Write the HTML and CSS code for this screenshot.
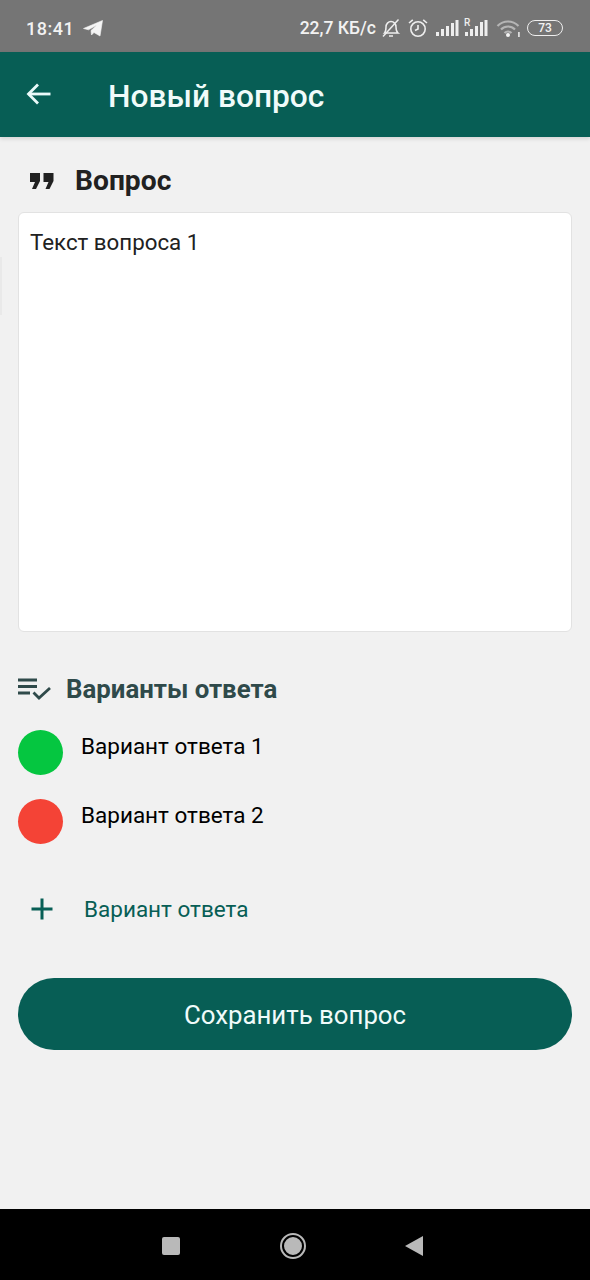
FILE: index.html
```html
<!DOCTYPE html>
<html>
<head>
    <meta charset="UTF-8">
    <title>Новый вопрос</title>
    <link rel="stylesheet" href="styles.css">
</head>
<body>

    <div class="status-bar">
        <div class="status-left">
            <span class="clock">18:41</span>
            <svg class="ic-telegram" width="20" height="18" viewBox="0 0 20 18"><path d="M0.500 9.500 19.500 1.500 17 17 11 13.500 8.500 16 8 11.500 14 6 5.500 10.800 Z" fill="#f5f5f5" stroke="#f5f5f5" stroke-width="0.6" stroke-linejoin="round"/></svg>
        </div>
        <div class="status-right">
            <span class="speed">22,7 КБ/с</span>
            <svg width="20" height="20" viewBox="0 0 20 20" fill="none" stroke="#eee" stroke-width="1.5"><path d="M3.500 15c1.500-1.500 1.500-3.500 1.500-6 0-3 2.200-5.500 5-5.500s5 2.500 5 5.500c0 2.500 0 4.500 2 6Z"/><path d="M8 18h4"/><path d="M2 18.500 17.500 1.500"/></svg>
            <svg class="ic-alarm" width="20" height="20" viewBox="0 0 20 20" fill="none" stroke="#eee" stroke-width="1.6"><circle cx="10" cy="11" r="7.200"/><path d="M10 7v4l-3 1.500"/><path d="M1 5 4.800 1.800M19 5 15.200 1.800"/></svg>
            <svg width="24" height="18" viewBox="0 0 24 18" fill="#eee"><rect x="1" y="13" width="3" height="4"/><rect x="6" y="10" width="3" height="7"/><rect x="11" y="7" width="3" height="10"/><rect x="16" y="4" width="3" height="13"/><rect x="20.500" y="1" width="3" height="16"/></svg>
            <svg class="ic-roam" width="24" height="20" viewBox="0 0 24 20" fill="#eee"><text x="0" y="8" class="roam">R</text><rect x="1" y="14" width="3" height="4"/><rect x="6" y="11" width="3" height="7"/><rect x="11" y="8" width="3" height="10"/><rect x="16" y="4" width="3" height="14"/><rect x="20.500" y="2" width="3" height="16"/></svg>
            <svg class="ic-wifi" width="26" height="20" viewBox="0 0 26 20" fill="none" stroke="#b5b5b5" stroke-width="2.200"><path d="M1.500 8c6-6 15-6 21 0"/><path d="M5 11.500c4-4 10-4 14 0"/><path d="M8.500 15c2-2 5-2 7 0"/><circle cx="12" cy="17" r="2" fill="#f5f5f5" stroke="none"/><rect x="22" y="14" width="1.800" height="5" fill="#ddd" stroke="none"/></svg>
            <span class="battery">73</span>
        </div>
    </div>

    <div class="app-bar">
        <svg class="back" width="28" height="28" viewBox="0 0 28 28" fill="none" stroke="#eafafa" stroke-width="2.800"><path d="M25.500 14H3.500"/><path d="M13 4.500 3.500 14l9.500 9.500"/></svg>
        <h1>Новый вопрос</h1>
    </div>

    <div class="side-tab"></div>

    <div class="content">
        <div class="question-title">
            <svg width="24" height="18" viewBox="0 0 24 18" fill="#212121"><path d="M0 1h10v8l-4 8H2l3-7H0ZM13.500 1h10v8l-4 8h-4l3-7h-5Z"/></svg>
            <span>Вопрос</span>
        </div>
        <div class="question-box">Текст вопроса 1</div>

        <div class="answers-title">
            <svg width="34" height="24" viewBox="0 0 34 24" fill="none" stroke="#2f4a4a" stroke-width="2.800"><path d="M0 3h19M0 9.500h19M0 16h12"/><path d="M15.500 15.500l5.500 5.500 11-10"/></svg>
            <span>Варианты ответа</span>
        </div>

        <div class="answer">
            <div class="dot green"></div>
            <div class="answer-text">Вариант ответа 1</div>
        </div>
        <div class="answer">
            <div class="dot red"></div>
            <div class="answer-text">Вариант ответа 2</div>
        </div>

        <div class="add-answer">
            <svg width="24" height="24" viewBox="0 0 24 24" stroke="#075e55" stroke-width="3"><path d="M12 1.500v21M1.500 12h21"/></svg>
            <span>Вариант ответа</span>
        </div>

        <div class="save-btn">Сохранить вопрос</div>
    </div>

    <div class="nav-bar">
        <div class="nav-square"></div>
        <div class="nav-home"></div>
        <div class="nav-back"></div>
    </div>

</body>
</html>
```

FILE: styles.css
```css
html, body {
    margin: 0;
    padding: 0;
}

body {
    position: relative;
    width: 590px;
    height: 1280px;
    display: flex;
    flex-direction: column;
    font-family: Roboto, "Noto Sans", sans-serif;
    background-color: #f1f1f1;
    overflow: hidden;
}

/* status bar */
.status-bar {
    height: 52px;
    flex: none;
    box-sizing: border-box;
    padding: 4px 27px 0 26px;
    background-color: #757575;
    display: flex;
    justify-content: space-between;
    align-items: center;
    color: #f2f2f2;
}

.status-left {
    display: flex;
    align-items: center;
    gap: 9px;
}

.clock {
    font-size: 18px;
    font-weight: 500;
    letter-spacing: 0.5px;
}

.status-right {
    display: flex;
    align-items: center;
    gap: 3px;
}

.speed {
    margin-right: 2px;
    font-size: 17.5px;
    font-weight: 500;
}

.ic-alarm {
    margin-left: 4px;
    margin-right: 4px;
}

.ic-roam {
    margin-left: 2px;
}

.ic-wifi {
    margin-left: 5px;
}

.roam {
    font-family: Roboto, sans-serif;
    font-size: 10px;
    font-weight: 500;
}

.battery {
    width: 34px;
    height: 14px;
    margin-left: 2px;
    border: 1.5px solid #eee;
    border-radius: 8px;
    font-size: 12px;
    font-weight: 500;
    line-height: 14px;
    text-align: center;
}

/* app bar */
.app-bar {
    height: 85px;
    flex: none;
    box-sizing: border-box;
    padding-left: 25px;
    background-color: #075e55;
    box-shadow: 0 2px 4px rgba(0, 0, 0, 0.12);
    display: flex;
    align-items: center;
    gap: 55px;
}

.back {
    margin-bottom: 2px;
}

.app-bar h1 {
    margin: 4px 0 0;
    font-size: 31.7px;
    font-weight: 500;
    color: #f0fbfa;
}

/* faint drawer handle on the left edge */
.side-tab {
    position: absolute;
    left: 0;
    top: 257px;
    width: 2px;
    height: 58px;
    background-color: #e9e9e9;
}

/* content */
.content {
    flex: 1;
    padding: 0 18px;
}

.question-title {
    height: 75px;
    box-sizing: border-box;
    padding: 12px 0 0 12px;
    display: flex;
    align-items: center;
    gap: 21px;
    font-size: 28.2px;
    font-weight: 700;
    color: #212121;
}

.question-box {
    height: 420px;
    box-sizing: border-box;
    padding: 15px 11px;
    background-color: #fff;
    border: 1px solid #e2e2e2;
    border-radius: 6px;
    font-size: 22.3px;
    line-height: 28px;
    color: #212121;
}

.answers-title {
    margin-top: 40px;
    height: 34px;
    display: flex;
    align-items: center;
    gap: 14px;
    font-size: 25.8px;
    font-weight: 700;
    color: #2f4a4a;
}

.answer {
    margin-top: 24px;
    height: 45px;
    display: flex;
    gap: 18px;
}

.dot {
    width: 45px;
    height: 45px;
    border-radius: 50%;
}

.green {
    background-color: #05c640;
}

.red {
    background-color: #f44336;
}

.answer-text {
    font-size: 22.5px;
    line-height: 32px;
    color: #000;
}

.add-answer {
    margin-top: 44px;
    padding-left: 12px;
    height: 42px;
    display: flex;
    align-items: center;
    gap: 30px;
    font-size: 22.5px;
    color: #075e55;
}

.save-btn {
    margin-top: 48px;
    height: 72px;
    border-radius: 36px;
    background-color: #075e55;
    color: #f0fbfa;
    font-size: 25.8px;
    line-height: 74px;
    text-align: center;
}

/* android nav */
.nav-bar {
    height: 71px;
    flex: none;
    box-sizing: border-box;
    padding: 2px 167px 0 162px;
    background-color: #000;
    display: flex;
    justify-content: space-between;
    align-items: center;
}

.nav-square {
    width: 18px;
    height: 18px;
    border-radius: 2px;
    background-color: #b9b9b9;
}

.nav-home {
    width: 18px;
    height: 18px;
    border: 2px solid #000;
    outline: 2px solid #b9b9b9;
    border-radius: 50%;
    background-color: #b9b9b9;
}

.nav-back {
    width: 0;
    height: 0;
    border-top: 10px solid transparent;
    border-bottom: 10px solid transparent;
    border-right: 18px solid #b9b9b9;
}
```
